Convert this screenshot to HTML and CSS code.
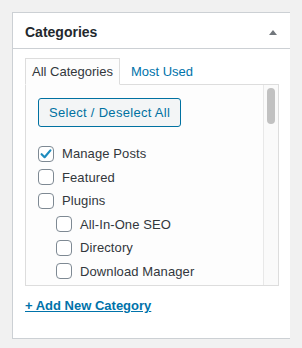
FILE: index.html
```html
<!DOCTYPE html>
<html lang="en">
<head>
    <meta charset="UTF-8">
    <meta name="viewport" content="width=device-width, initial-scale=1.0">
    <title>Categories</title>
    <link rel="stylesheet" href="styles.css">
</head>
<body>
    <div class="postbox">
        <div class="postbox-header">
            <h2>Categories</h2>
            <span class="toggle-arrow"></span>
        </div>
        <div class="inside">
            <ul class="cat-tabs">
                <li class="tab active">All Categories</li>
                <li class="tab"><a href="#">Most Used</a></li>
            </ul>
            <div class="tabs-panel">
                <div class="cat-list">
                    <button class="select-btn" type="button">Select / Deselect All</button>
                    <ul class="checklist">
                        <li><label><span class="box checked"><svg viewBox="0 0 16 16" width="16" height="16"><path d="M3.6 8.2 L6.6 11.2 L12.4 4.4" fill="none" stroke="#1e8cbe" stroke-width="2.2" stroke-linecap="round" stroke-linejoin="round"/></svg></span>Manage Posts</label></li>
                        <li><label><span class="box"></span>Featured</label></li>
                        <li><label><span class="box"></span>Plugins</label>
                            <ul class="children">
                                <li><label><span class="box"></span>All-In-One SEO</label></li>
                                <li><label><span class="box"></span>Directory</label></li>
                                <li><label><span class="box"></span>Download Manager</label></li>
                            </ul>
                        </li>
                    </ul>
                </div>
                <div class="scrollbar"><div class="thumb"></div></div>
            </div>
            <a class="add-new" href="#">+ Add New Category</a>
        </div>
    </div>
</body>
</html>
```

FILE: styles.css
```css
body {
    font-family: 'Liberation Sans', Arial, sans-serif;
    font-size: 13px;
    color: #32373c;
    background-color: #f1f1f1;
    margin: 12px;
}
.postbox {
    width: 280px;
    box-sizing: border-box;
    background-color: #ffffff;
    border: 1px solid #ccd0d4;
    box-shadow: 0 1px 1px rgba(0, 0, 0, 0.04);
}
.postbox-header {
    display: flex;
    align-items: center;
    justify-content: space-between;
    height: 35px;
    padding: 0 14px 0 12px;
    border-bottom: 1px solid #ccd0d4;
}
.postbox-header h2 {
    margin: 0;
    padding-top: 2px;
    font-size: 14px;
    font-weight: bold;
    color: #23282d;
}
.toggle-arrow {
    width: 0;
    height: 0;
    margin-top: 3px;
    border-left: 4px solid transparent;
    border-right: 4px solid transparent;
    border-bottom: 5px solid #72777c;
}
.inside {
    padding: 9px 12px 22px;
}
.cat-tabs {
    display: flex;
    list-style: none;
    margin: 0 0 -1px;
    padding: 0;
}
.cat-tabs .tab {
    padding: 0 6px;
    line-height: 25px;
    border: 1px solid transparent;
    border-bottom: none;
}
.cat-tabs .tab.active {
    background-color: #fdfdfd;
    border-color: #dddddd;
    border-bottom: 1px solid #fdfdfd;
    position: relative;
}
.cat-tabs .tab + .tab {
    margin-left: 4px;
}
.cat-tabs a {
    color: #0073aa;
    text-decoration: none;
}
.tabs-panel {
    display: flex;
    height: 200px;
    border: 1px solid #dddddd;
    background-color: #fdfdfd;
}
.cat-list {
    flex: 1;
    overflow: hidden;
    padding: 13px 12px 0;
}
.select-btn {
    height: 29px;
    padding: 0 10px;
    font-family: inherit;
    font-size: 13px;
    letter-spacing: 0.3px;
    color: #0071a1;
    background-color: #f3f5f6;
    border: 1px solid #0071a1;
    border-radius: 3px;
}
.checklist {
    list-style: none;
    margin: 15px 0 0;
    padding: 0;
    letter-spacing: 0.1px;
}
.checklist label {
    display: flex;
    align-items: center;
    height: 23.5px;
}
.children {
    list-style: none;
    margin: 0;
    padding: 0 0 0 18px;
}
.box {
    display: inline-block;
    width: 16px;
    height: 16px;
    box-sizing: border-box;
    margin-right: 8px;
    border: 1px solid #7e8993;
    border-radius: 4px;
    background-color: #ffffff;
    position: relative;
}
.box svg {
    position: absolute;
    left: -1px;
    top: -1px;
}
.scrollbar {
    width: 15px;
    box-sizing: border-box;
    border-left: 1px solid #e8e8e8;
    background-color: #fafafa;
    padding: 3px 0 0 3px;
}
.thumb {
    width: 8px;
    height: 36px;
    border-radius: 4px;
    background-color: #c1c1c1;
}
.add-new {
    display: inline-block;
    margin-top: 10px;
    line-height: 20px;
    font-weight: bold;
    color: #0073aa;
    text-decoration: underline;
}
```
